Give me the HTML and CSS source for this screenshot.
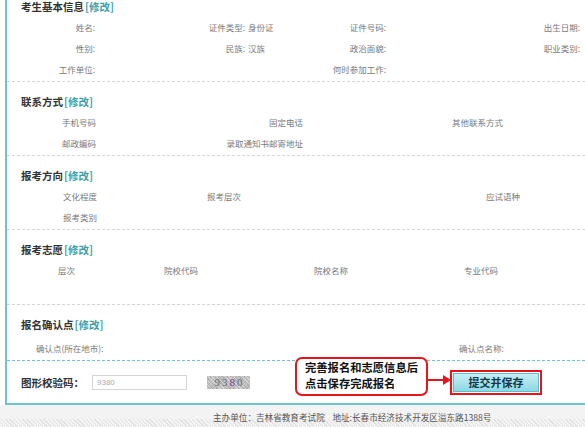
FILE: index.html
```html
<!DOCTYPE html>
<html lang="zh-CN">
<head>
    <meta charset="UTF-8">
    <meta name="viewport" content="width=device-width, initial-scale=1.0">
    <title>报名信息确认</title>
    <link rel="stylesheet" href="styles.css">
</head>
<body>
    <div class="panel">
        <section class="block block-first">
            <h3 class="block-title">考生基本信息<a class="edit">[修改]</a></h3>
            <div class="grid grid-basic">
                <span class="lbl">姓名:</span><span class="val"></span>
                <span class="lbl">证件类型:</span><span class="val">身份证</span>
                <span class="lbl">证件号码:</span><span class="val"></span>
                <span class="lbl">出生日期:</span>

                <span class="lbl">性别:</span><span class="val"></span>
                <span class="lbl">民族:</span><span class="val">汉族</span>
                <span class="lbl">政治面貌:</span><span class="val"></span>
                <span class="lbl">职业类别:</span>

                <span class="lbl">工作单位:</span><span class="val"></span>
                <span class="lbl"></span><span class="val"></span>
                <span class="lbl">何时参加工作:</span><span class="val"></span>
                <span class="lbl"></span>
            </div>
        </section>

        <section class="block">
            <h3 class="block-title">联系方式<a class="edit">[修改]</a></h3>
            <div class="grid grid-contact">
                <span class="lbl">手机号码</span><span class="val"></span>
                <span class="lbl">固定电话</span><span class="val"></span>
                <span class="lbl">其他联系方式</span><span class="val"></span>

                <span class="lbl">邮政编码</span><span class="val"></span>
                <span class="lbl">录取通知书邮寄地址</span><span class="val"></span>
                <span class="lbl"></span><span class="val"></span>
            </div>
        </section>

        <section class="block">
            <h3 class="block-title">报考方向<a class="edit">[修改]</a></h3>
            <div class="grid grid-direction">
                <span class="lbl">文化程度</span><span class="val"></span>
                <span class="lbl">报考层次</span><span class="val"></span>
                <span class="lbl">应试语种</span><span class="val"></span>

                <span class="lbl">报考类别</span><span class="val"></span>
                <span class="lbl"></span><span class="val"></span>
                <span class="lbl"></span><span class="val"></span>
            </div>
        </section>

        <section class="block block-wish">
            <h3 class="block-title">报考志愿<a class="edit">[修改]</a></h3>
            <div class="grid grid-wish">
                <span>层次</span>
                <span>院校代码</span>
                <span>院校名称</span>
                <span>专业代码</span>
            </div>
            <div class="row-empty"></div>
        </section>

        <section class="block block-confirm">
            <h3 class="block-title">报名确认点<a class="edit">[修改]</a></h3>
            <div class="grid grid-confirm">
                <span>确认点(所在地市):</span>
                <span>确认点名称:</span>
            </div>
        </section>

        <div class="captcha-row">
            <label class="captcha-label" for="code">图形校验码：</label>
            <input class="captcha-input" id="code" type="text" value="9380">
            <div class="captcha-img">93<span class="purple">8</span>0</div>

            <div class="callout">完善报名和志愿信息后<br>点击保存完成报名</div>
            <svg class="callout-arrow" width="24" height="12" viewBox="0 0 24 12">
                <line x1="0" y1="6" x2="18" y2="6" stroke="#e8141c" stroke-width="2"/>
                <path d="M15 1 L23 6 L15 11 Z" fill="#e8141c"/>
            </svg>

            <span class="btn-frame"><button class="btn-submit">提交并保存</button></span>
        </div>
    </div>

    <div class="footer">
        主办单位：吉林省教育考试院&nbsp;&nbsp;&nbsp;&nbsp;地址:长春市经济技术开发区溢东路1388号
    </div>
</body>
</html>
```

FILE: styles.css
```css
body {
    margin: 0;
    font-family: "Noto Sans CJK SC", "Liberation Sans", sans-serif;
    background-color: #fff;
    overflow: hidden;
    color: #7a7a7a;
}
.panel {
    margin: -3px 0 0 5px;
    border-left: 2px solid #6cc5cc;
    border-bottom: 2px solid #6cc5cc;
}
.block {
    padding: 10px 0 1px;
    border-bottom: 1px dashed #d8d8d8;
}
.block-first {
    padding-top: 0;
}
.block-wish {
    padding-bottom: 2px;
}
.block-confirm {
    border-bottom: 1px dashed #6cc5cc;
}
.block-title {
    margin: 0;
    padding-left: 14px;
    height: 20px;
    line-height: 20px;
    font-size: 10.5px;
    font-weight: bold;
    color: #333;
}
.edit {
    color: #3e9fa8;
    margin-left: 1px;
}
.grid {
    display: grid;
    font-size: 8.5px;
    line-height: 21px;
}
.grid span {
    height: 21px;
    white-space: nowrap;
}
.lbl {
    text-align: right;
}
.val {
    padding-left: 3px;
}
.grid-basic {
    grid-template-columns: 88px 62px 88px 53px 88px 106px 88px;
}
.grid-contact {
    grid-template-columns: 89px 90px 117px 100px 100px 1fr;
}
.grid-direction {
    grid-template-columns: 90px 70px 74px 205px 74px 1fr;
}
.grid-wish {
    padding-left: 51px;
    grid-template-columns: 106px 150px 150px 1fr;
}
.row-empty {
    height: 21px;
}
.grid-confirm {
    margin-top: 3px;
    padding-left: 29px;
    grid-template-columns: 423px 1fr;
}
.captcha-row {
    position: relative;
    display: flex;
    align-items: center;
    height: 42px;
    padding-left: 14px;
}
.captcha-label {
    width: 71px;
    font-size: 10.5px;
    font-weight: bold;
    color: #333;
}
.captcha-input {
    box-sizing: border-box;
    width: 95px;
    height: 15px;
    margin: 0;
    padding: 0 4px;
    border: 1px solid #d6d6d6;
    font-family: "Liberation Sans", sans-serif;
    font-size: 8px;
    color: #aaa;
}
.captcha-img {
    margin-left: 20px;
    width: 43px;
    height: 13px;
    line-height: 13px;
    text-align: center;
    font-family: "Liberation Serif", serif;
    font-size: 11px;
    letter-spacing: 2px;
    text-indent: 2px;
    color: #6a6f78;
    background-color: #c4c4c4;
    background-image: repeating-linear-gradient(45deg, rgba(255,255,255,0.35) 0 1px, transparent 1px 3px),
                      repeating-linear-gradient(-45deg, rgba(0,0,0,0.12) 0 1px, transparent 1px 2px);
}
.purple {
    color: #7a3d8c;
}
.callout {
    position: absolute;
    left: 288px;
    top: -4px;
    box-sizing: border-box;
    width: 133px;
    height: 39px;
    padding: 0 0 0 8px;
    border: 2px solid #e8141c;
    border-radius: 7px;
    background: #fff;
    font-size: 11.3px;
    font-weight: bold;
    line-height: 16px;
    color: #111;
    white-space: nowrap;
}
.callout-arrow {
    position: absolute;
    left: 421px;
    top: 13px;
}
.btn-frame {
    margin-left: 200px;
    box-sizing: border-box;
    width: 92px;
    height: 25px;
    padding: 1px;
    border: 2px solid #e8141c;
    background: #fff;
    display: flex;
}
.btn-submit {
    flex: 1;
    margin: 0;
    padding: 0;
    border: 1px solid #5cc0cc;
    background: linear-gradient(#c6eff5, #8cd9e5);
    font-family: "Noto Sans CJK SC", sans-serif;
    font-size: 11px;
    font-weight: bold;
    color: #123a4a;
    cursor: pointer;
}
.footer {
    height: 22px;
    padding-left: 213px;
    font-size: 8.6px;
    line-height: 24px;
    color: #555;
    white-space: nowrap;
    background-color: #f3f3f3;
    background-image: repeating-linear-gradient(45deg, #e2e2e2 0 1px, transparent 1px 3px);
    background-size: 100% 8px;
    background-position: bottom;
    background-repeat: no-repeat;
}
```
